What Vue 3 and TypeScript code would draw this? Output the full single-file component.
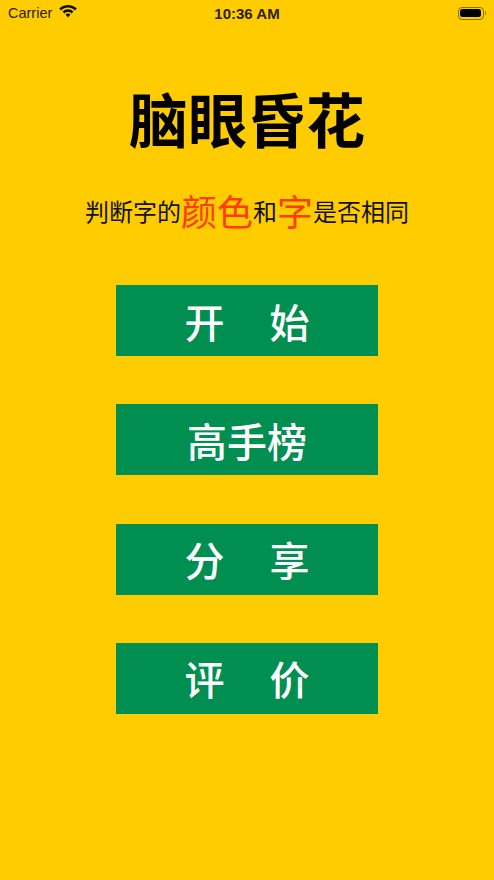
<script setup lang="ts">
const buttons: string[][] = [['开', '始'], ['高手榜'], ['分', '享'], ['评', '价']]
</script>

<template>
  <div class="screen">
    <header class="status">
      <div class="status-left">
        <span class="carrier">Carrier</span>
        <svg class="wifi" width="18" height="13" viewBox="0 0 18 13">
          <path d="M9 0C5.600 0 2.500 1.300.2 3.500l1.800 1.900C3.800 3.700 6.300 2.600 9 2.600s5.200 1.100 7 2.800l1.800-1.900C15.500 1.300 12.400 0 9 0z" fill="#111" />
          <path d="M9 4.300c-2.100 0-4 .8-5.400 2.200l1.800 1.900C6.300 7.500 7.600 7 9 7s2.700.5 3.600 1.400l1.800-1.900C13 5.100 11.100 4.300 9 4.300z" fill="#111" />
          <path d="M9 8.600c-1 0-1.800.4-2.400 1L9 12.600l2.400-3c-.6-.6-1.400-1-2.400-1z" fill="#111" />
        </svg>
      </div>
      <span class="time">10:36 AM</span>
      <div class="battery-wrap">
        <div class="battery"><div class="battery-fill"></div></div>
        <div class="nub"></div>
      </div>
    </header>

    <h1 class="title">脑眼昏花</h1>
    <p class="subtitle">判断字的<span class="accent">颜色</span>和<span class="accent">字</span>是否相同</p>

    <nav class="menu">
      <div v-for="parts in buttons" :key="parts.join('')" class="btn">
        <span v-for="part in parts" :key="part">{{ part }}</span>
      </div>
    </nav>
  </div>
</template>

<style>
html, body { margin: 0; padding: 0; background: #ffcc00; }
</style>

<style scoped>
.screen {
  width: 494px;
  height: 880px;
  overflow: hidden;
  background: #ffcc00;
  display: flex;
  flex-direction: column;
  align-items: center;
  font-family: "Liberation Sans", "Noto Sans CJK SC", sans-serif;
  color: #111;
}
.status {
  box-sizing: border-box;
  width: 100%;
  height: 26px;
  padding: 0 8px;
  display: grid;
  grid-template-columns: 1fr auto 1fr;
  align-items: center;
}
.status-left { display: flex; align-items: center; gap: 7px; }
.carrier { font-size: 14.500px; color: #2a2200; }
.wifi { margin-top: -3px; }
.time { font-size: 15px; font-weight: 700; color: #2a2200; }
.battery-wrap { justify-self: end; display: flex; align-items: center; gap: 1px; }
.battery {
  box-sizing: border-box;
  width: 26px;
  height: 13px;
  border: 1px solid #8a6f00;
  border-radius: 4px;
  padding: 1.500px;
}
.battery-fill { width: 100%; height: 100%; background: #000; border-radius: 2.500px; }
.nub { width: 1.500px; height: 4px; background: #8a6f00; border-radius: 0 1px 1px 0; }
.title {
  margin: 58px 0 0;
  font-size: 59px;
  line-height: 78px;
  font-weight: 700;
  color: #000;
}
.subtitle {
  margin: 22px 0 0;
  height: 52px;
  display: flex;
  align-items: center;
  font-size: 24px;
  color: #111;
}
.accent { font-size: 36px; color: #ff3b00; }
.menu {
  margin-top: 49px;
  display: flex;
  flex-direction: column;
  gap: 48.300px;
}
.btn {
  width: 262px;
  height: 71px;
  background: #008f51;
  color: #fff;
  font-size: 40px;
  font-weight: 500;
  display: flex;
  align-items: center;
  justify-content: center;
  gap: 45px;
}
</style>
